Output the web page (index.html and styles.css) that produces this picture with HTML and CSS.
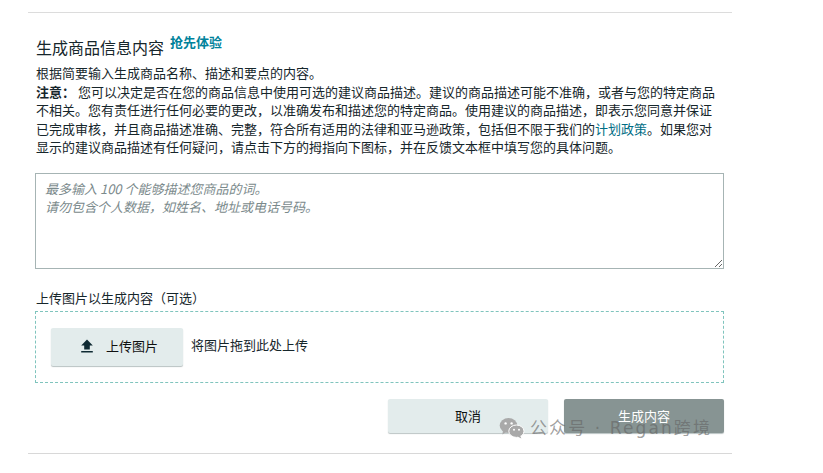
FILE: index.html
```html
<!DOCTYPE html>
<html lang="zh">
<head>
<meta charset="utf-8">
<title>生成商品信息内容</title>
<link rel="stylesheet" href="styles.css">
</head>
<body>
<main class="panel">
  <section class="content">
    <h2 class="title"><span>生成商品信息内容</span><sup class="badge">抢先体验</sup></h2>
    <p class="desc">根据简要输入生成商品名称、描述和要点的内容。<br><b>注意：</b> 您可以决定是否在您的商品信息中使用可选的建议商品描述。建议的商品描述可能不准确，或者与您的特定商品<br>不相关。您有责任进行任何必要的更改，以准确发布和描述您的特定商品。使用建议的商品描述，即表示您同意并保证<br>已完成审核，并且商品描述准确、完整，符合所有适用的法律和亚马逊政策，包括但不限于我们的<a class="link" href="#">计划政策</a>。如果您对<br>显示的建议商品描述有任何疑问，请点击下方的拇指向下图标，并在反馈文本框中填写您的具体问题。</p>
    <textarea class="input" placeholder="最多输入 100 个能够描述您商品的词。&#10;请勿包含个人数据，如姓名、地址或电话号码。"></textarea>
    <label class="upload-label">上传图片以生成内容（可选）</label>
    <div class="dropzone">
      <button class="btn upload-btn" type="button">
        <svg class="upload-icon" width="14" height="14" viewBox="0 0 14 14" aria-hidden="true"><path d="M7 0.6 1.2 6.6H4.2V10.6H9.8V6.6H12.8Z" fill="#0f2a33"/><rect x="1.2" y="12" width="11.6" height="1.5" fill="#0f2a33"/></svg>
        <span>上传图片</span>
      </button>
      <span class="drop-text">将图片拖到此处上传</span>
    </div>
    <div class="actions">
      <button class="btn cancel" type="button">取消</button>
      <button class="btn generate" type="button">生成内容</button>
    </div>
  </section>
  <div class="watermark">
    <svg width="26" height="22" viewBox="0 0 26 22" aria-hidden="true"><ellipse cx="9.5" cy="8.5" rx="8.8" ry="7.6" fill="#a9a9a9"/><path d="M4 13 3.4 17.4 8 14.6Z" fill="#a9a9a9"/><circle cx="6.6" cy="6.4" r="1.2" fill="#fff"/><circle cx="12.6" cy="6.4" r="1.2" fill="#fff"/><ellipse cx="17.4" cy="14.2" rx="7.6" ry="6.2" fill="#a9a9a9" stroke="#fff" stroke-width="1"/><path d="M21 18.4 22.4 21.6 18.4 19.6Z" fill="#a9a9a9"/><circle cx="15" cy="12.8" r="1" fill="#fff"/><circle cx="20" cy="12.8" r="1" fill="#fff"/></svg>
    <span>公众号 · Regan跨境</span>
  </div>
</main>
</body>
</html>
```

FILE: styles.css
```css
* { box-sizing: border-box; }
html, body { margin: 0; background: #fff; }
body {
  width: 823px;
  height: 473px;
  overflow: hidden;
  font-family: "Noto Sans CJK SC", "Liberation Sans", sans-serif;
  color: #0f1111;
}
.panel {
  position: relative;
  width: 704px;
  margin: 12px 0 0 28px;
  height: 442px;
  border-top: 1px solid #dcdcdc;
  border-bottom: 1px solid #d8d8d8;
}
.content {
  display: flex;
  flex-direction: column;
  padding: 20px 8px 0 7px;
}
.title {
  display: flex;
  align-items: flex-start;
  margin: 0;
  height: 31px;
  padding-left: 1px;
  font-size: 16px;
  line-height: 28px;
  font-weight: 400;
  color: #16262b;
}
.badge {
  margin: 0 0 0 6px;
  font-size: 13px;
  line-height: 18px;
  font-weight: 700;
  color: #00829b;
}
.desc {
  margin: 0;
  padding-left: 1px;
  font-size: 13px;
  line-height: 18.5px;
  white-space: nowrap;
  color: #16262b;
}
.desc b { font-weight: 700; }
.link { color: #006d85; text-decoration: none; }
.input {
  display: block;
  width: 689px;
  height: 96px;
  margin-top: 16px;
  padding: 6px 9px;
  border: 1px solid #a6b4b4;
  border-radius: 0;
  font: italic 13px/18.5px "Noto Sans CJK SC", "Liberation Sans", sans-serif;
  outline: none;
  resize: vertical;
}
.input::placeholder { color: #7b8a8c; opacity: 1; }
.upload-label {
  margin-top: 20px;
  padding-left: 1px;
  font-size: 13px;
  line-height: 18px;
  color: #16262b;
}
.dropzone {
  display: flex;
  align-items: center;
  gap: 8px;
  width: 689px;
  height: 72px;
  margin-top: 4px;
  padding: 0 15px;
  border: 1px dashed #7fc4bd;
}
.btn {
  border: 0;
  border-radius: 2px;
  font-family: inherit;
  font-size: 13px;
  cursor: pointer;
}
.upload-btn {
  display: flex;
  align-items: center;
  gap: 12px;
  width: 132px;
  height: 38px;
  padding: 0 0 2px 29px;
  background: #e3ecec;
  color: #0f1111;
  box-shadow: 0 1px 1px #b9c2c2;
}
.upload-icon { display: block; }
.drop-text { font-size: 13px; line-height: 18px; color: #16262b; padding-bottom: 3px; }
.actions {
  display: flex;
  justify-content: flex-end;
  gap: 16px;
  width: 689px;
  margin-top: 16px;
}
.cancel, .generate { width: 160px; height: 34px; padding-bottom: 1px; }
.cancel { background: #e3ecec; color: #0f1111; box-shadow: 0 1px 1px #bcc5c5; }
.generate { background: #879493; color: #fff; box-shadow: 0 1px 1px #b9c2c2; }
.watermark {
  position: absolute;
  left: 471px;
  top: 403px;
  display: flex;
  align-items: center;
  gap: 5px;
  font-family: "DejaVu Sans", "Noto Sans CJK SC", sans-serif;
  font-size: 17px;
  line-height: 24px;
  letter-spacing: 2.1px;
  color: rgba(100, 100, 100, 0.62);
  white-space: nowrap;
}
```
